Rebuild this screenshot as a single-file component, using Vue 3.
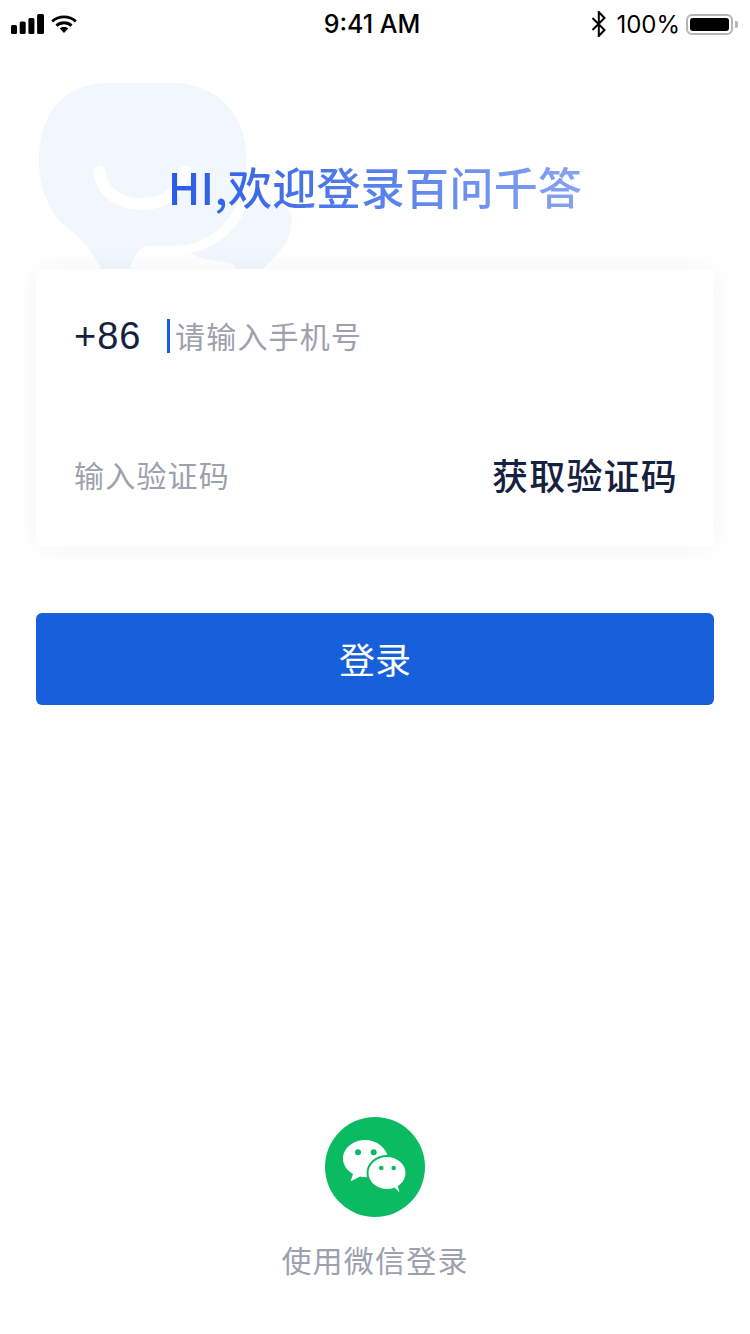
<template>
  <div class="login-page">
    <!-- pale mascot behind the heading -->
    <svg class="mascot" viewBox="0 0 900 600" width="300" height="200">
      <path fill="#f2f6fd" d="M685 402C650 480 590 535 510 548C550 575 600 572 636 580L650 600H728C750 570 815 530 815 450C815 425 800 408 775 403Z"/>
      <path fill="#f2f6fd" d="M270 38H450C590 38 680 130 680 270C680 400 600 525 470 527H390C360 527 340 560 328 600H245C220 550 190 510 150 480C90 435 57 360 57 270C57 130 130 38 270 38Z"/>
      <path fill="none" stroke="#fff" stroke-width="36" stroke-linecap="round" d="M238 305C245 370 300 402 365 402C420 402 470 380 497 305"/>
    </svg>

    <header class="status-bar">
      <div class="status-left">
        <svg width="34" height="20" viewBox="0 0 34 20">
          <rect x="0" y="11" width="6" height="9" rx="1.5"/>
          <rect x="8.7" y="7.5" width="6" height="12.5" rx="1.5"/>
          <rect x="17.4" y="4" width="6" height="16" rx="1.5"/>
          <rect x="26.1" y="0" width="6.9" height="20" rx="1.5"/>
        </svg>
        <svg class="wifi" width="26" height="18" viewBox="0 0 26 18">
          <path fill="none" stroke="#000" stroke-width="2.8" d="M1.2 6.4C7.8 .4 18.2 .4 24.8 6.4"/>
          <path fill="none" stroke="#000" stroke-width="2.8" d="M5.4 10.6C9.8 6.8 16.2 6.8 20.6 10.6"/>
          <path d="M8.7 13.3C11.2 11.4 14.8 11.4 17.3 13.3L13 18Z"/>
        </svg>
      </div>
      <div class="status-time">9:41 AM</div>
      <div class="status-right">
        <svg width="16" height="26" viewBox="0 0 16 26">
          <path fill="none" stroke="#000" stroke-width="2" d="M1.5 7L13.500 19L7.800 25V1L13.500 7L1.500 19"/>
        </svg>
        <span class="battery-text">100%</span>
        <div class="battery">
          <div class="battery-fill"></div>
        </div>
        <div class="battery-tip"></div>
      </div>
    </header>

    <h1 class="title">HI,欢迎登录百问千答</h1>

    <form class="card" @submit.prevent>
      <div class="row phone-row">
        <span class="code">+86</span>
        <i class="caret"></i>
        <input class="field" type="text" placeholder="请输入手机号" />
      </div>
      <div class="row sms-row">
        <input class="field" type="text" placeholder="输入验证码" />
        <span class="get-code">获取验证码</span>
      </div>
    </form>

    <button class="submit" type="button">登录</button>

    <div class="wechat">
      <div class="wechat-icon">
        <svg width="100" height="100" viewBox="0 0 100 100">
          <path fill="#fff" d="M40 23C28 23 18 31.500 18 41.500C18 48 22 53.500 28 57L25.500 64.500L35 59.500C37 60 39 60.300 41 60.300C45 60.300 60 50 63.500 42C62 31 52 23 40 23Z"/>
          <ellipse cx="62" cy="56" rx="19.500" ry="17" fill="#fff" stroke="#0abb62" stroke-width="2"/>
          <path fill="#fff" d="M69 70L74.500 75.500L72 66Z"/>
          <circle cx="33" cy="35.300" r="3" fill="#0abb62"/>
          <circle cx="48.700" cy="35.300" r="3" fill="#0abb62"/>
          <circle cx="56.300" cy="51" r="2.300" fill="#0abb62"/>
          <circle cx="68.700" cy="51" r="2.300" fill="#0abb62"/>
        </svg>
      </div>
      <div class="wechat-text">使用微信登录</div>
    </div>
  </div>
</template>

<script setup>
</script>

<style>
html,
body {
  background: #fff;
}
</style>

<style scoped>
.login-page {
  position: relative;
  width: 750px;
  height: 1334px;
  overflow: hidden;
  background: #fff;
  font-family: "Noto Sans CJK SC", "Inter", sans-serif;
}

.mascot {
  position: absolute;
  left: 20px;
  top: 70px;
}

.status-bar {
  position: relative;
  height: 48px;
  display: flex;
  align-items: center;
  justify-content: space-between;
  padding: 0 12px 0 11px;
  font-family: "Inter", sans-serif;
  color: #000;
}

.status-left {
  display: flex;
  align-items: center;
  gap: 6px;
  width: 240px;
}

.status-time {
  font-size: 25px;
  font-weight: 500;
  margin-left: -5px;
}

.status-right {
  display: flex;
  align-items: center;
  justify-content: flex-end;
  width: 240px;
}

.battery-text {
  font-size: 24px;
  margin: 0 6px 0 9px;
}

.battery {
  width: 47px;
  height: 21px;
  box-sizing: border-box;
  padding: 2px;
  border: 2px solid #b5b5b5;
  border-radius: 6px;
}

.battery-fill {
  height: 100%;
  background: #000;
  border-radius: 3px;
}

.battery-tip {
  width: 3px;
  height: 7px;
  margin-left: 2px;
  background: #b5b5b5;
  border-radius: 0 2px 2px 0;
}

.title {
  position: relative;
  margin: 0;
  padding: 108px 0 53px;
  text-align: center;
  font-size: 44px;
  font-weight: 500;
  letter-spacing: 0.3px;
  line-height: 60px;
  background: linear-gradient(90deg, #2a5de6 170px, #86a3f2 580px);
  -webkit-background-clip: text;
  background-clip: text;
  color: transparent;
}

.card {
  position: relative;
  width: 678px;
  height: 278px;
  margin: 0 auto;
  box-sizing: border-box;
  padding: 0 36px 0 38px;
  background: #fff;
  border-radius: 6px;
  box-shadow: 0 0 24px rgba(30, 50, 100, 0.05);
}

.row {
  display: flex;
  align-items: center;
  height: 60px;
}

.phone-row {
  padding-top: 37px;
}

.sms-row {
  margin-top: 78px;
  justify-content: space-between;
}

.code {
  width: 93px;
  flex: none;
  font-family: "Liberation Sans", sans-serif;
  font-size: 38px;
  letter-spacing: 1px;
  color: #16213f;
}

.caret {
  flex: none;
  width: 3px;
  height: 34px;
  margin-right: 5px;
  background: #175fdb;
}

.field {
  flex: 1;
  min-width: 0;
  padding: 0;
  border: none;
  outline: none;
  background: transparent;
  font-family: inherit;
  font-size: 30px;
  letter-spacing: 1.2px;
  color: #16213f;
}

.phone-row .field {
  margin-top: -2px;
}

.field::placeholder {
  color: #9ca1ad;
  opacity: 1;
}

.get-code {
  flex: none;
  font-size: 36px;
  font-weight: 500;
  letter-spacing: 1.2px;
  color: #16213f;
}

.submit {
  display: block;
  width: 678px;
  height: 92px;
  margin: 66px auto 0;
  padding: 0 0 2px;
  border: none;
  border-radius: 6px;
  background: #175fdb;
  color: #fff;
  font-family: inherit;
  font-size: 36px;
}

.wechat {
  display: flex;
  flex-direction: column;
  align-items: center;
  margin-top: 412px;
}

.wechat-icon {
  width: 100px;
  height: 100px;
  border-radius: 50%;
  background: #0abb62;
}

.wechat-icon svg {
  display: block;
}

.wechat-text {
  margin-top: 20px;
  font-size: 30px;
  letter-spacing: 1.2px;
  line-height: 44px;
  color: #9ca1ad;
}
</style>
